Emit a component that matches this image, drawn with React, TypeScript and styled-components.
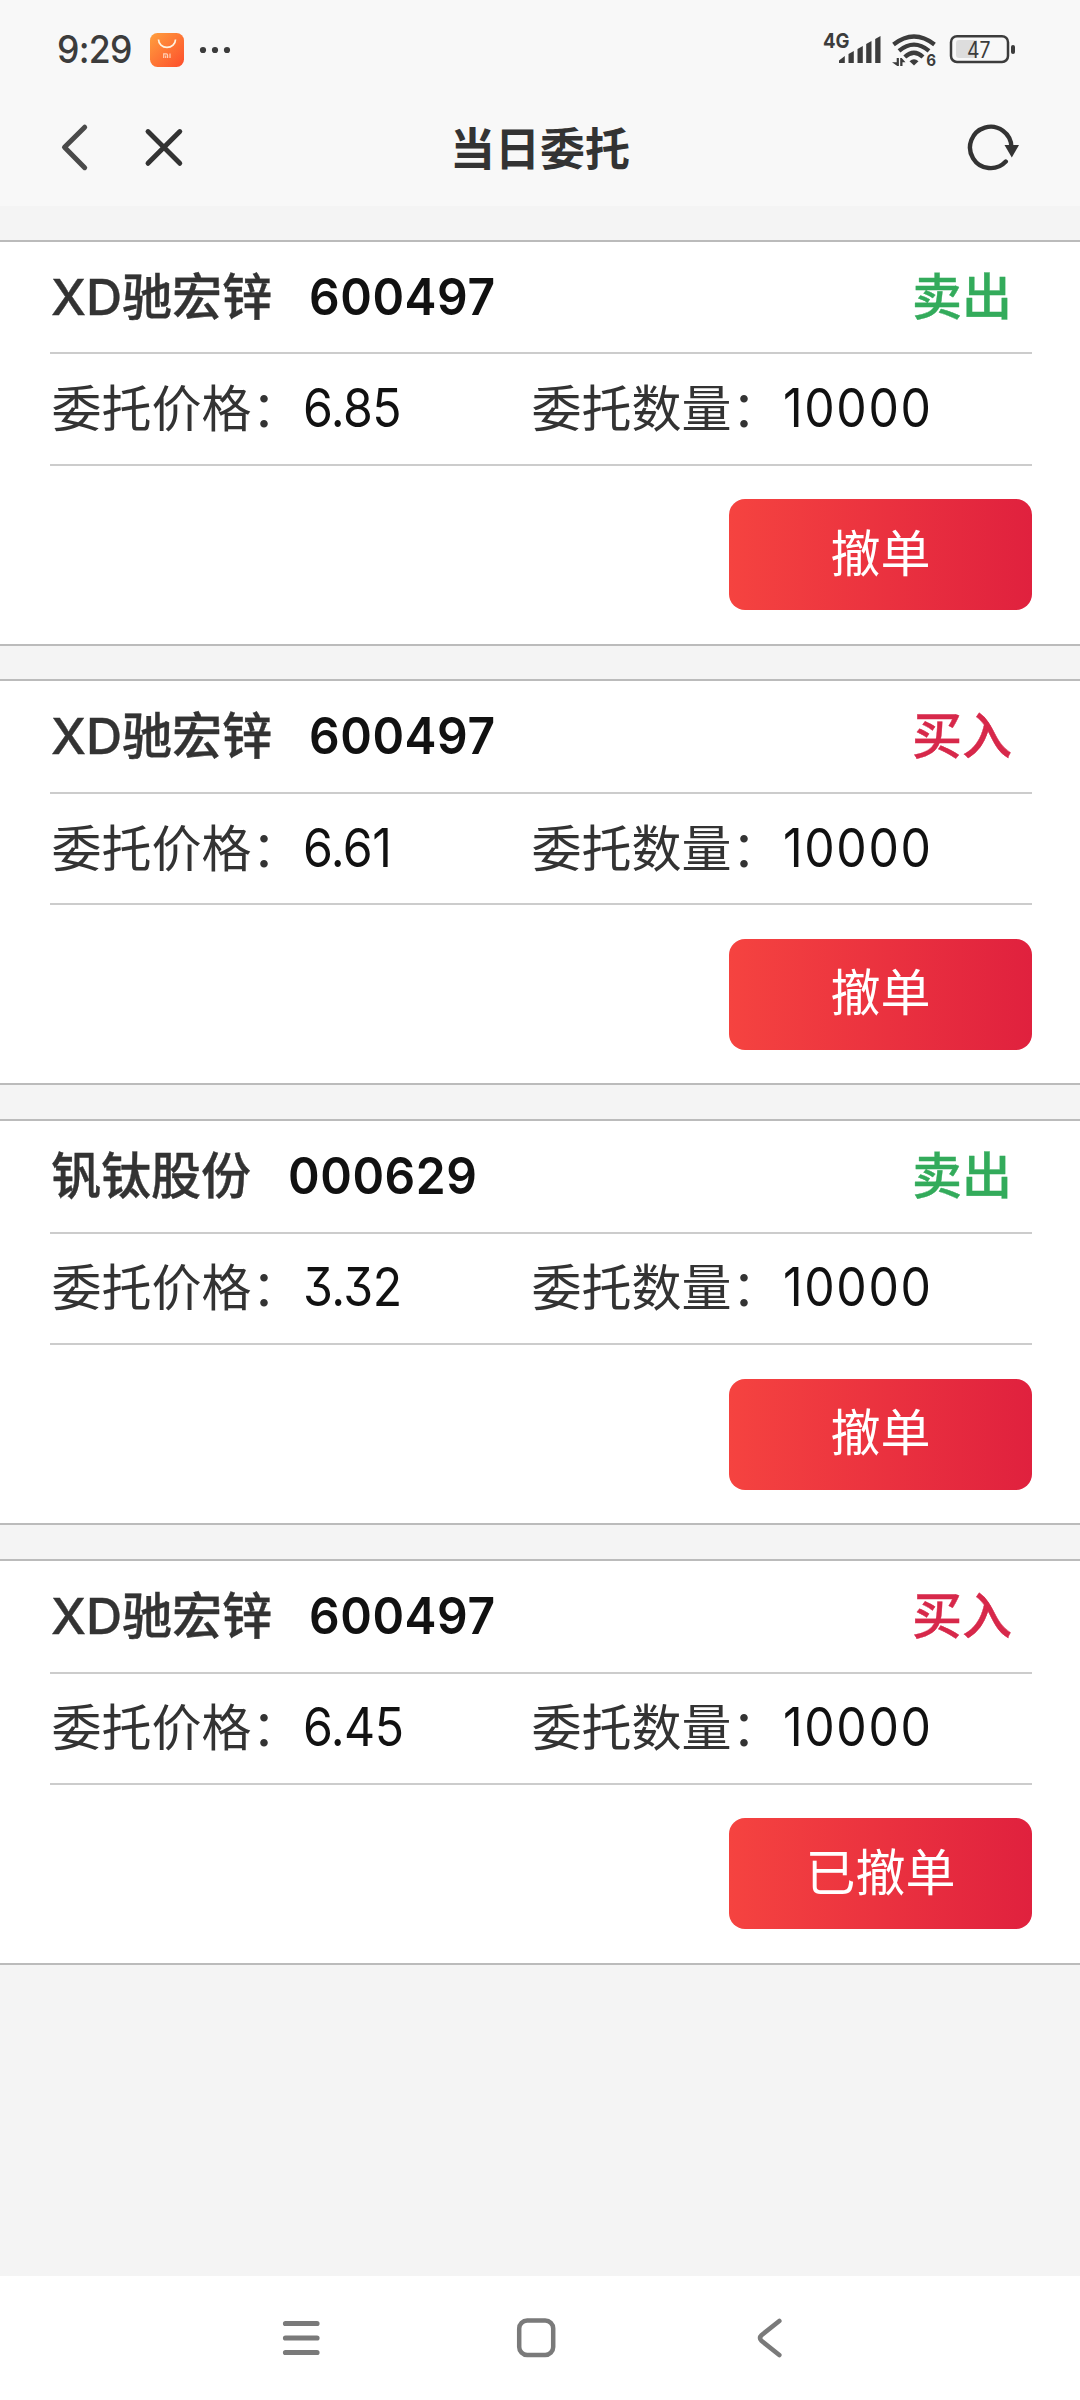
import React from 'react';
import styled, { createGlobalStyle } from 'styled-components';

const Global = createGlobalStyle`
  * { box-sizing: border-box; }
  body { margin: 0; background: #f4f4f4; }
`;

const hans = '"Noto Sans CJK SC", sans-serif';
const latin = 'Inter, "Noto Sans CJK SC", sans-serif';

const Screen = styled.div`
  width: 1080px;
  height: 2400px;
  display: flex;
  flex-direction: column;
  background: #f4f4f4;
  color: #333;
  font-family: ${hans};
  overflow: hidden;
`;

const StatusBar = styled.header`
  height: 96px;
  padding: 4px 64px 0 57px;
  display: flex;
  align-items: center;
  background: #f8f8f8;
`;

const Clock = styled.span`
  width: 92px;
  font: 500 37.5px/50px ${latin};
  letter-spacing: -0.8px;
  white-space: nowrap;
  transform: scaleX(0.95);
  transform-origin: left;
  color: #3c3c3c;
`;

const StatusIcons = styled.div`
  margin-left: auto;
  display: flex;
  align-items: center;
`;

const NavBar = styled.nav`
  height: 110px;
  padding: 0 54px;
  display: grid;
  grid-template-columns: 1fr auto 1fr;
  align-items: start;
  background: #f8f8f8;
`;

const NavSide = styled.div<{ $end?: boolean }>`
  padding-top: 22px;
  display: flex;
  gap: 50px;
  justify-content: ${p => (p.$end ? 'flex-end' : 'flex-start')};
`;

const Title = styled.h1`
  margin: 0;
  padding-top: 21px;
  font: 700 45px/60px ${hans};
`;

const OrderList = styled.main`
  flex: 1;
  padding-top: 33.7px;
  display: flex;
  flex-direction: column;
  gap: 33.7px;
`;

const Card = styled.article`
  flex: none;
  height: 406px;
  padding: 0 48px 0 50px;
  border-top: 2px solid #bbb;
  border-bottom: 2px solid #bbb;
  background: #fff;
`;

const Row = styled.div`
  height: 111.15px;
  padding-bottom: 1px;
  border-bottom: 2px solid #ccc;
  display: flex;
  align-items: center;
`;

const HeadRow = styled(Row)`
  height: 112.75px;
  padding: 0 20px 1px 1px;
`;

const StockName = styled.span`
  font: 500 50px/74px ${latin};
  -webkit-text-stroke: 0.4px currentColor;
  white-space: nowrap;
`;

const StockCode = styled.span`
  margin-left: 36.5px;
  font: 600 51px/74px ${latin};
  letter-spacing: 0.6px;
  transform: scaleX(0.94);
  transform-origin: left;
  color: #111;
`;

const Side = styled.span<{ $sell: boolean }>`
  margin-left: auto;
  font: 500 50px/74px ${latin};
  -webkit-text-stroke: 0.4px currentColor;
  color: ${p => (p.$sell ? '#33ab5b' : '#d7284a')};
`;

const Field = styled.div<{ $w: number }>`
  width: ${p => p.$w}px;
  padding-left: 1.5px;
  display: flex;
  align-items: baseline;
  white-space: nowrap;
`;

const Label = styled.span`
  width: 251.5px;
  font: 400 50px/74px ${latin};
`;

const Value = styled.span<{ $spacing: number }>`
  font: 400 53px/74px ${latin};
  font-feature-settings: 'cv09';
  letter-spacing: ${p => p.$spacing}px;
  transform: scaleX(0.91);
  transform-origin: left;
  color: #111;
`;

const Actions = styled.div`
  padding-top: 33.7px;
  display: flex;
  justify-content: flex-end;
`;

const CancelButton = styled.button`
  width: 303px;
  height: 111px;
  padding: 0 0 10px;
  border: 0;
  border-radius: 16px;
  background: linear-gradient(90deg, #f54340, #e0213e);
  color: #fff;
  font: 400 50px/74px ${hans};
`;

const SystemNav = styled.footer`
  height: 124px;
  padding: 0 294px 0 281px;
  display: flex;
  align-items: center;
  justify-content: space-between;
  background: #fff;
`;

const SvgLabel = styled.text<{ $size: number; $weight: number }>`
  font-family: ${latin};
  font-size: ${p => p.$size}px;
  font-weight: ${p => p.$weight};
`;

const orders = [
  { name: 'XD驰宏锌', code: '600497', side: '卖出', price: '6.85', qty: '10000', action: '撤单' },
  { name: 'XD驰宏锌', code: '600497', side: '买入', price: '6.61', qty: '10000', action: '撤单' },
  { name: '钒钛股份', code: '000629', side: '卖出', price: '3.32', qty: '10000', action: '撤单' },
  { name: 'XD驰宏锌', code: '600497', side: '买入', price: '6.45', qty: '10000', action: '已撤单' },
];

export default function App() {
  return (
    <Screen>
      <Global />
      <StatusBar>
        <Clock>9:29</Clock>
        <svg width="82" height="36" viewBox="149 32 82 36">
          <defs>
            <linearGradient id="store" x1="0" y1="0" x2="1" y2="1">
              <stop offset="0" stopColor="#ffa03e" />
              <stop offset="1" stopColor="#fd4d2c" />
            </linearGradient>
          </defs>
          <rect x="150" y="33" width="34" height="34" rx="7.5" fill="url(#store)" />
          <path d="M158.5 39.5a8.5 7.8 0 0 0 17 0" fill="none" stroke="#fff3e0" strokeWidth="1.7" />
          <path d="M163.7 58v-4.2h2.6q1.3 0 1.3 1.4V58M165.7 55.5V58M170 53.5V58" fill="none" stroke="#ffd0b5" strokeWidth="1.2" />
          <g fill="#3c3c3c"><circle cx="203" cy="50" r="3.1" /><circle cx="215" cy="50" r="3.1" /><circle cx="227" cy="50" r="3.1" /></g>
        </svg>
        <StatusIcons>
          <svg width="194" height="52" viewBox="822 24 194 52" fill="#3c3c3c">
            <SvgLabel x="823" y="48" $size={20.5} $weight={700} textLength="26.5" lengthAdjust="spacingAndGlyphs">4G</SvgLabel>
            <path d="M839 63v-2.5l5.8-4.5V63zM848.5 63V54l5.3-3V63zM857.5 63V49l5.3-3V63zM866.2 63V44l5.3-3V63zM875.2 63V39l5.3-3V63z" />
            <g fill="none" stroke="#3c3c3c" strokeWidth="4.3">
              <path d="M893.5 44.5Q914 28.5 934.5 44.5" />
              <path d="M899 50.8Q914 38.5 929 50.8" />
              <path d="M904.8 57Q914 48.5 923 57" />
            </g>
            <path d="M909.5 61.3q4.5-4.3 9 0L914 65.5z" />
            <path d="M892 62.3h4.7V58h2.2v8h-1.6zM900.2 58h1.5l3.8 4.3h-3V66h-2.3z" />
            <SvgLabel x="926.3" y="66" $size={16} $weight={700} textLength="9.8" lengthAdjust="spacingAndGlyphs">6</SvgLabel>
            <rect x="951" y="36.2" width="57" height="25.8" rx="6" fill="none" stroke="#3c3c3c" strokeWidth="2.5" />
            <path d="M959 40h18v18h-18q-3 0-3-3V43q0-3 3-3z" fill="#ddd" />
            <SvgLabel x="967" y="58" $size={22.7} $weight={400} textLength="23.5" lengthAdjust="spacingAndGlyphs">47</SvgLabel>
            <rect x="1011" y="45" width="4" height="9" rx="2" />
          </svg>
        </StatusIcons>
      </StatusBar>
      <NavBar>
        <NavSide>
          <svg width="40" height="60" viewBox="54 118 40 60"><path d="M84.7 127.2L64.5 147.3l20.2 20.4" fill="none" stroke="#4a4a4a" strokeWidth="5" strokeLinecap="round" strokeLinejoin="round" /></svg>
          <svg width="40" height="60" viewBox="144 118 40 60"><path d="M148 131.500l31.800 31.800M179.800 131.500l-31.800 31.800" fill="none" stroke="#333" strokeWidth="4.900" strokeLinecap="round" /></svg>
        </NavSide>
        <Title>当日委托</Title>
        <NavSide $end>
          <svg width="60" height="60" viewBox="966 118 60 60">
            <path d="M1005.800 161.600A20.700 20.700 0 1 1 1011.400 147" fill="none" stroke="#333" strokeWidth="4.400" strokeLinecap="round" />
            <path d="M1004.500 145h14.500l-7.200 12.500z" fill="#333" />
          </svg>
        </NavSide>
      </NavBar>
      <OrderList>
        {orders.map((o, i) => (
          <Card key={i}>
            <HeadRow>
              <StockName>{o.name}</StockName>
              <StockCode>{o.code}</StockCode>
              <Side $sell={o.side === '卖出'}>{o.side}</Side>
            </HeadRow>
            <Row>
              <Field $w={480}><Label>委托价格：</Label><Value $spacing={-0.6}>{o.price}</Value></Field>
              <Field $w={500}><Label>委托数量：</Label><Value $spacing={1.8}>{o.qty}</Value></Field>
            </Row>
            <Actions><CancelButton>{o.action}</CancelButton></Actions>
          </Card>
        ))}
      </OrderList>
      <SystemNav>
        <svg width="40" height="48" viewBox="281 2314 40 48"><path d="M285.500 2323.500h31.500M285.500 2338h31.500M285.500 2352.500h31.500" stroke="#7a7a7a" strokeWidth="5.200" strokeLinecap="round" /></svg>
        <svg width="44" height="48" viewBox="514 2314 44 48"><rect x="519.200" y="2320.500" width="34" height="34.500" rx="8" fill="none" stroke="#7a7a7a" strokeWidth="4.500" /></svg>
        <svg width="35" height="48" viewBox="751 2314 35 48"><path d="M779.300 2321L761.500 2335.200q-3 2.800 0 5.600L779.300 2355" fill="none" stroke="#7a7a7a" strokeWidth="4.600" strokeLinecap="round" /></svg>
      </SystemNav>
    </Screen>
  );
}
